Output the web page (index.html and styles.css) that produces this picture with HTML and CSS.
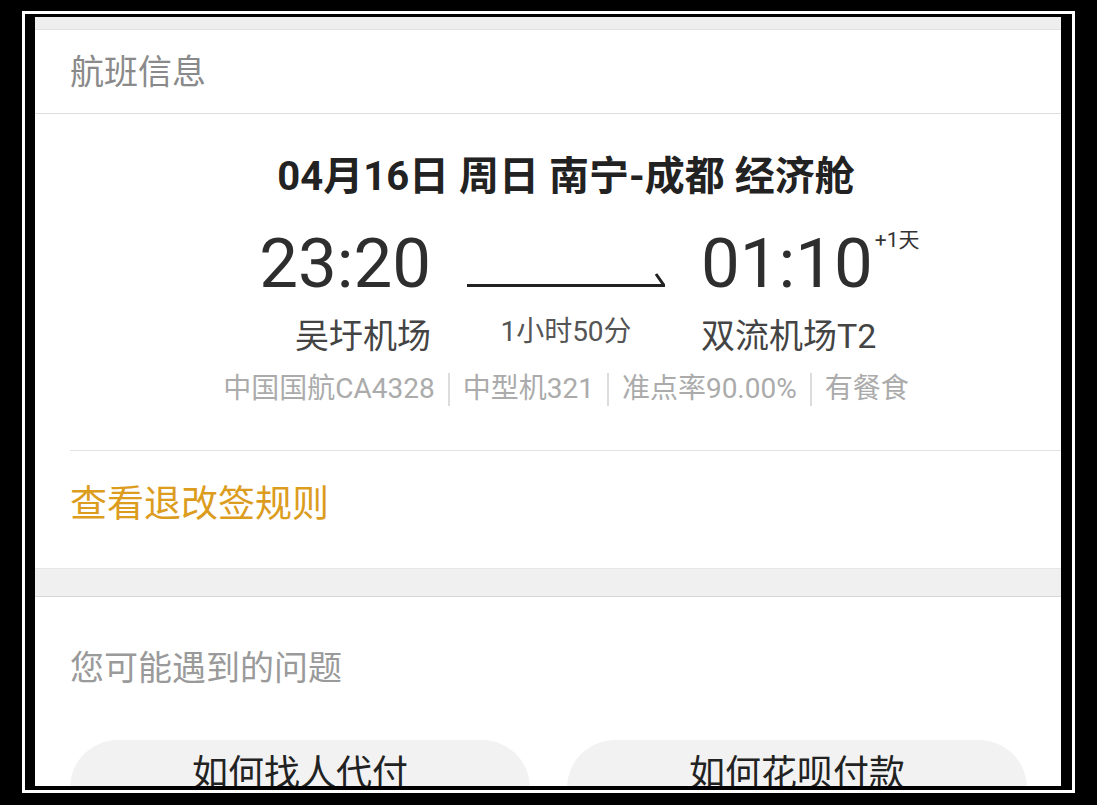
FILE: index.html
```html
<!DOCTYPE html>
<html lang="zh-CN">
<head>
    <meta charset="UTF-8">
    <meta name="viewport" content="width=device-width, initial-scale=1.0">
    <title>航班信息</title>
    <link rel="stylesheet" href="styles.css">
</head>
<body>

    <div class="frame">
        <div class="screen">
            <div class="topbar"></div>

            <div class="section-head">航班信息</div>

            <div class="flight">
                <h2 class="flight-title">04月16日 周日 南宁-成都 经济舱</h2>
                <div class="flight-grid">
                    <div class="time dep">23:20</div>
                    <div class="arrow">
                        <svg width="198" height="16" viewBox="0 0 198 16">
                            <path d="M0 14.5 H197 L189 3" fill="none" stroke="#222" stroke-width="3"/>
                        </svg>
                    </div>
                    <div class="time arr">01:10<sup class="plus-day">+1天</sup></div>
                    <div class="airport dep">吴圩机场</div>
                    <div class="duration">1小时50分</div>
                    <div class="airport arr">双流机场T2</div>
                </div>
                <div class="flight-meta">
                    <span>中国国航CA4328</span><i class="sep"></i><span>中型机321</span><i class="sep"></i><span>准点率90.00%</span><i class="sep"></i><span>有餐食</span>
                </div>
            </div>

            <div class="rules">
                <a class="rules-link" href="#">查看退改签规则</a>
            </div>

            <div class="gap-band"></div>

            <div class="faq">
                <div class="faq-title">您可能遇到的问题</div>
                <div class="faq-list">
                    <div class="faq-item">如何找人代付</div>
                    <div class="faq-item">如何花呗付款</div>
                </div>
            </div>
        </div>
    </div>

</body>
</html>
```

FILE: styles.css
```css
* {
    box-sizing: border-box;
}
body {
    margin: 0;
    width: 1097px;
    height: 805px;
    overflow: hidden;
    background: #000;
    font-family: Roboto, "Noto Sans CJK SC", sans-serif;
}
.frame {
    margin: 11px 0 0 22px;
    width: 1053px;
    height: 782px;
    border: 3px solid #fff;
    padding: 3px 11px 4px 10px;
}
.screen {
    height: 100%;
    background: #fff;
    overflow: hidden;
}
.topbar {
    height: 13px;
    background: #eeeeee;
    border-bottom: 1px solid #e2e2e2;
}
.section-head {
    height: 84px;
    padding: 0 0 4px 35px;
    display: flex;
    align-items: center;
    font-size: 34px;
    color: #8a8a8a;
    border-bottom: 1px solid #dedede;
}

/* flight card */
.flight {
    padding: 41px 0 0 36px;
    text-align: center;
}
.flight-title {
    margin: 0;
    font-size: 40px;
    font-weight: 700;
    line-height: 44px;
    color: #222;
}
.flight-grid {
    margin-top: 25px;
    display: grid;
    grid-template-columns: 1fr 198px 1fr;
    column-gap: 36px;
    align-items: end;
}
.time {
    font-size: 69px;
    line-height: 80px;
    color: #2e2e2e;
    position: relative;
}
.dep {
    text-align: right;
}
.arr {
    text-align: left;
}
.arrow {
    height: 80px;
    display: flex;
    align-items: flex-end;
    padding-bottom: 17px;
}
.arrow svg {
    display: block;
}
.plus-day {
    position: absolute;
    top: 6px;
    margin-left: 2px;
    font-size: 21px;
    line-height: 21px;
    color: #333;
}
.airport {
    font-size: 34px;
    line-height: 44px;
    color: #444;
    margin-top: 10px;
}
.duration {
    font-size: 28px;
    line-height: 36px;
    color: #555;
    align-self: start;
    margin-top: 10px;
}
.flight-meta {
    margin-top: 11px;
    display: flex;
    justify-content: center;
    align-items: center;
    font-size: 28px;
    line-height: 40px;
    color: #ababab;
}
.sep {
    display: block;
    width: 2px;
    height: 33px;
    margin: 0 13px;
    background: #dcdcdc;
}

/* refund rules */
.rules {
    margin-left: 35px;
    margin-top: 41px;
    height: 118px;
    padding-bottom: 17px;
    display: flex;
    align-items: center;
    border-top: 1px solid #e2e2e2;
}
.rules-link {
    font-size: 37px;
    color: #dc9c1e;
    text-decoration: none;
}
.gap-band {
    height: 29px;
    background: #f0f0f0;
    border-top: 1px solid #e6e6e6;
    border-bottom: 1px solid #d6d6d6;
}

/* faq */
.faq {
    padding: 50px 34px 0 35px;
}
.faq-title {
    font-size: 34px;
    line-height: 43px;
    color: #9a9a9a;
}
.faq-list {
    margin-top: 50px;
    display: grid;
    grid-template-columns: 460px 460px;
    column-gap: 37px;
}
.faq-item {
    height: 96px;
    padding-top: 10px;
    border-radius: 48px;
    background: #f2f2f2;
    text-align: center;
    font-size: 36px;
    line-height: 48px;
    color: #222;
}
```
